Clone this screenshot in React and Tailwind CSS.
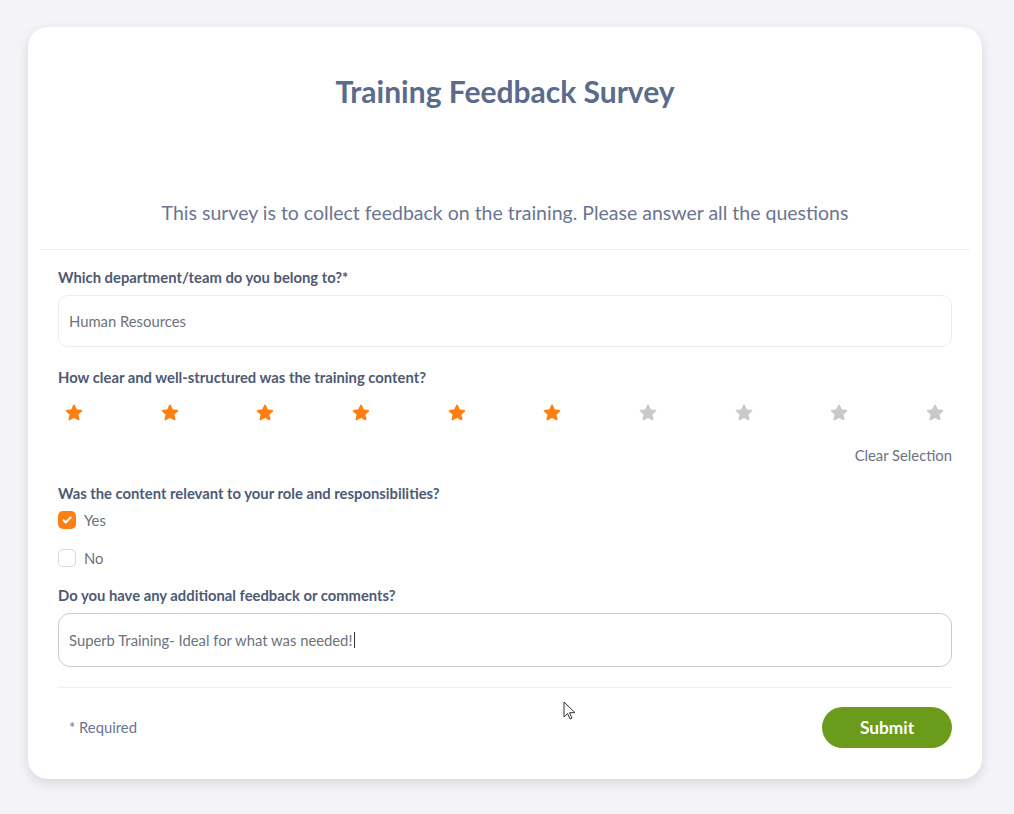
import React from "react";

function Star({ on }) {
  const c = on ? "#ff7f11" : "#c9c9cc";
  return (
    <svg width="20" height="20" viewBox="0 0 24 24">
      <path
        d="M12 2.8l2.7 5.8 6.3.7-4.7 4.3 1.3 6.2L12 16.7l-5.6 3.1 1.3-6.2L3 9.3l6.3-.7z"
        fill={c}
        stroke={c}
        strokeWidth="2"
        strokeLinejoin="round"
      />
    </svg>
  );
}

export default function App() {
  const font = { fontFamily: "Lato, 'Open Sans', sans-serif" };
  return (
    <div className="w-[1014px] h-[814px] bg-[#f3f3f8] pt-[27px] px-[28px] relative" style={font}>
      <div className="w-[954px] h-[752px] bg-white rounded-[20px] shadow-[0_4px_12px_rgba(0,0,0,0.12)] flex flex-col">
        <h1 className="text-center text-[30px] font-bold text-[#5a6b8c] mt-[46px] leading-[36px]">
          Training Feedback Survey
        </h1>
        <p className="text-center text-[19.5px] text-[#6b7591] mt-[91px] leading-[26px]">
          This survey is to collect feedback on the training. Please answer all the questions
        </p>
        <div className="mt-[23px] mx-[12px] h-px bg-[#f0f0f3]" />
        <div className="px-[30px] flex flex-col">
          <label className="mt-[18px] text-[14.8px] font-bold text-[#4e5a73] leading-[18px]">
            Which department/team do you belong to?*
          </label>
          <div className="mt-[9px] h-[52px] rounded-[10px] border border-[#ececef] flex items-center px-[10px] text-[14.8px] text-[#6b7280]">
            Human Resources
          </div>
          <label className="mt-[21px] text-[14.8px] font-bold text-[#4e5a73] leading-[18px]">
            How clear and well-structured was the training content?
          </label>
          <div className="mt-[17px] flex justify-between pl-[6px] pr-[7px]">
            {[1, 2, 3, 4, 5, 6, 7, 8, 9, 10].map((i) => (
              <Star key={i} on={i <= 6} />
            ))}
          </div>
          <div className="mt-[23px] text-right text-[14.8px] text-[#6b7280] leading-[18px]">
            Clear Selection
          </div>
          <label className="mt-[20px] text-[14.8px] font-bold text-[#4e5a73] leading-[18px]">
            Was the content relevant to your role and responsibilities?
          </label>
          <div className="mt-[9px] flex items-center gap-[8px] h-[18px]">
            <div className="w-[18px] h-[18px] rounded-[5px] bg-[#ff7f11] flex items-center justify-center">
              <svg width="12" height="12" viewBox="0 0 12 12">
                <path d="M2.5 6.2l2.3 2.3 4.7-5" fill="none" stroke="white" strokeWidth="2" strokeLinecap="round" strokeLinejoin="round" />
              </svg>
            </div>
            <span className="text-[14.8px] text-[#6b7280]">Yes</span>
          </div>
          <div className="mt-[20px] flex items-center gap-[8px] h-[18px]">
            <div className="w-[18px] h-[18px] rounded-[5px] border border-[#d7d7dc] bg-white" />
            <span className="text-[14.8px] text-[#6b7280]">No</span>
          </div>
          <label className="mt-[19px] text-[14.8px] font-bold text-[#4e5a73] leading-[18px]">
            Do you have any additional feedback or comments?
          </label>
          <div className="mt-[9px] h-[54px] rounded-[12px] border border-[#c9c9ce] flex items-center px-[10px] text-[14.8px] text-[#6b7280]">
            Superb Training- Ideal for what was needed!
            <span className="inline-block w-px h-[16px] bg-[#333] ml-[2px]" />
          </div>
          <div className="mt-[20px] h-px bg-[#f0f0f3]" />
          <div className="mt-[19px] flex items-center justify-between">
            <span className="ml-[11px] text-[14.8px] text-[#6b7591]">* Required</span>
            <button className="w-[130px] h-[41px] rounded-full bg-[#6b9b1b] text-white text-[17.3px] font-bold">
              Submit
            </button>
          </div>
        </div>
      </div>
      <svg className="absolute left-[563px] top-[701px]" width="14" height="20" viewBox="0 0 14 20">
        <path d="M1 1v15l3.5-3.5 2.5 5.5 2-1-2.5-5.3H12z" fill="white" stroke="#333" strokeWidth="1" strokeLinejoin="round" />
      </svg>
    </div>
  );
}
